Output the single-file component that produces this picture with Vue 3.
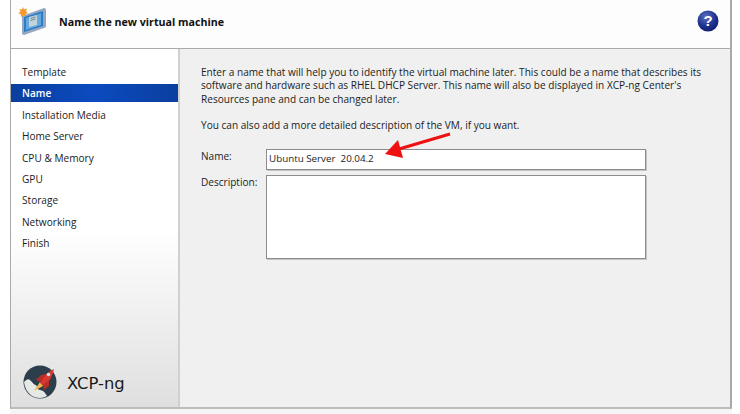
<script setup>
const steps = ['Template', 'Name', 'Installation Media', 'Home Server', 'CPU & Memory', 'GPU', 'Storage', 'Networking', 'Finish']
</script>

<template>
  <div class="page">
    <div class="window">
      <header class="head">
        <svg class="vm-icon" width="30" height="32" viewBox="0 0 30 32">
          <path d="M5 11 L27 3 Q29 3 29 5 L29 21 Q29 23 27 23 L7 30 Q5 30 5 28 Z" fill="#95a6c0" />
          <path d="M7 12 L26 6 L26 21 L7 27 Z" fill="#2d7cc6" />
          <path d="M9 13 L24 8.500 L24 20 L9 25 Z" fill="#63a9dd" />
          <path d="M12 12 L20 10 L20 20 L12 22 Z" fill="#c5d3da" />
          <path d="M13.500 13.500 L18.500 12 M13.500 15.500 L18.500 14" stroke="#6f8798" stroke-width="1" />
          <path d="M6 2 L7 4.500 L10 3.500 L9 6.500 L11 8 L8.500 9 L8.500 11.500 L6.500 10.500 L4 12 L4 9.500 L1.500 8.500 L3.500 6.500 L2.500 4 L5 4.500 Z" fill="#f39a2c" />
        </svg>
        <h1 class="title">Name the new virtual machine</h1>
        <svg class="help" width="22" height="22" viewBox="0 0 22 22">
          <defs>
            <radialGradient id="hb" cx=".4" cy=".3" r=".8">
              <stop offset="0" stop-color="#5a6fc0" />
              <stop offset=".6" stop-color="#1c2f8c" />
              <stop offset="1" stop-color="#101c60" />
            </radialGradient>
          </defs>
          <circle cx="11" cy="11" r="10.500" fill="url(#hb)" />
          <text x="11" y="16" text-anchor="middle" class="help-q">?</text>
        </svg>
      </header>
      <div class="body">
        <aside class="side">
          <ul class="steps">
            <li v-for="s in steps" :key="s" class="step" :class="{ active: s === 'Name' }">{{ s }}</li>
          </ul>
          <div class="brand">
            <svg width="34" height="34" viewBox="0 0 34 34">
              <circle cx="17" cy="17" r="16.500" fill="#2c3e4c" />
              <path d="M1 17 Q5 12 8 16 Q11 20 14 21 Q13 24 17 25 Q21 25 24 31 Q17 35 9 31 Q2 26 1 17 Z" fill="#e6e8e6" />
              <path d="M11 26 L17 17 L20 21 Z" fill="#f2b84b" />
              <path d="M17 18 Q21 8 31 4 Q29 15 21 21 Z" fill="#d8382f" />
              <path d="M18 10 L23 9 L18 17 L13 15 Z" fill="#b92d27" />
              <path d="M26 15 L26 21 L21 25 L20 20 Z" fill="#b92d27" />
              <circle cx="25.500" cy="9.500" r="1.800" fill="#bfe3e8" />
            </svg>
            <span class="brand-name">XCP-ng</span>
          </div>
        </aside>
        <main class="content">
          <p class="intro">Enter a name that will help you to identify the virtual machine later. This could be a name that describes its software and hardware such as RHEL DHCP Server. This name will also be displayed in XCP-ng Center's Resources pane and can be changed later.</p>
          <p class="more">You can also add a more detailed description of the VM, if you want.</p>
          <div class="form">
            <label class="lbl">Name:</label>
            <div class="field name-field">Ubuntu Server&nbsp; 20.04.2</div>
            <label class="lbl">Description:</label>
            <div class="field desc-field"></div>
          </div>
          <svg class="arrow" width="70" height="30" viewBox="0 0 70 30">
            <path d="M66 2 L15 17" stroke="#ee1111" stroke-width="3" fill="none" />
            <path d="M1 22 L14 8 L19 26 Z" fill="#ee1111" />
          </svg>
        </main>
      </div>
    </div>
  </div>
</template>

<style scoped>
.page {
  width: 740px;
  height: 414px;
  background: #fff;
  overflow: hidden;
  font-family: "Open Sans", "Noto Sans", sans-serif;
  color: #1c1c1c;
}
.window {
  margin-left: 10px;
  width: 722px;
  height: 409px;
  box-sizing: border-box;
  border-left: 1px solid #a9a9a9;
  border-right: 2px solid #a9a9a9;
  border-bottom: 2px solid #bcbcbc;
  display: flex;
  flex-direction: column;
  box-shadow: 0 6px 0 #f5f5f5;
}
.head {
  height: 49px;
  box-sizing: border-box;
  background: #fdfdfd;
  border-bottom: 1px solid #a9a9a9;
  display: flex;
  align-items: center;
  flex: none;
}
.vm-icon {
  margin-left: 6px;
  margin-top: -6px;
  flex: none;
}
.title {
  margin: -4px 0 0 12px;
  font-size: 10.700px;
  font-weight: 700;
  color: #111;
  flex: 1;
}
.help {
  margin-right: 11px;
  margin-top: -6px;
  flex: none;
}
.help-q {
  font-family: "Liberation Sans", sans-serif;
  font-size: 15px;
  font-weight: 700;
  fill: #fff;
}
.body {
  flex: 1;
  display: flex;
  min-height: 0;
}
.side {
  width: 167px;
  flex: none;
  border-right: 2px solid #d0d0d0;
  background: linear-gradient(#fff 0%, #fff 50%, #dfdfdf 100%);
  display: flex;
  flex-direction: column;
  justify-content: space-between;
}
.steps {
  list-style: none;
  margin: 0;
  padding: 14px 0 0;
}
.step {
  height: 18px;
  line-height: 18px;
  margin-bottom: 3.400px;
  padding-left: 11px;
  font-size: 10.100px;
  color: #222;
}
.active {
  background: linear-gradient(90deg, #0a3f9e, #0b4bc0 50%, #0a3f9e);
  color: #fff;
  font-weight: 600;
}
.brand {
  display: flex;
  align-items: center;
  gap: 10px;
  padding: 0 0 8px 12px;
}
.brand-name {
  font-family: "DejaVu Sans", sans-serif;
  font-size: 16.400px;
  color: #1a1a1a;
  margin-top: 2px;
}
.content {
  position: relative;
  flex: 1;
  background: #f0f0f0;
  padding: 17px 20px 0 21px;
}
.intro {
  margin: 0;
  font-size: 10.080px;
  line-height: 13.300px;
}
.more {
  margin: 13.300px 0 0;
  font-size: 10.080px;
  line-height: 13.300px;
}
.form {
  margin-top: 16.500px;
  display: grid;
  grid-template-columns: 65px 380px;
  grid-template-rows: 21px 84px;
  row-gap: 5px;
}
.lbl {
  font-size: 10.060px;
  line-height: 15px;
}
.field {
  box-sizing: border-box;
  background: #fff;
  border: 1px solid #8c8c8c;
  box-shadow: 1px 1px 0 #c4c4c4;
  font-size: 9.800px;
  line-height: 18px;
  padding-left: 2px;
}
.arrow {
  position: absolute;
  left: 204px;
  top: 83px;
}
</style>

<style>
body { margin: 0; background: #fff; }
</style>
